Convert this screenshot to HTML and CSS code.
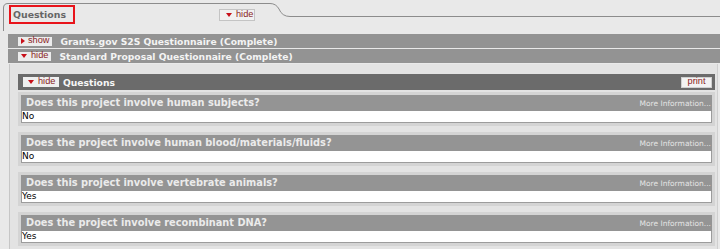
FILE: index.html
```html
<!DOCTYPE html>
<html>
<head>
<meta charset="utf-8">
<link rel="stylesheet" href="styles.css">
</head>
<body>
<div class="tabrow">
  <svg class="tabline" width="720" height="34" viewBox="0 0 720 34">
    <path d="M3.5,31 V8 Q3.5,3.5 8,3.5 H270 Q276,3.5 279,9 Q282,16.5 290,16.5 H720" fill="none" stroke="#8c8c8c" stroke-width="1"/>
  </svg>
  <div class="tabcontent">
    <h2 class="tabtitle">Questions</h2>
    <span class="btn btn-tab"><span class="tri-down"></span>hide</span>
  </div>
</div>
<div class="section">
  <div class="bar">
    <span class="btn btn-bar"><span class="tri-right"></span>show</span>
    <span class="bar-title">Grants.gov S2S Questionnaire (Complete)</span>
  </div>
  <div class="bar">
    <span class="btn btn-bar"><span class="tri-down"></span>hide</span>
    <span class="bar-title">Standard Proposal Questionnaire (Complete)</span>
  </div>
  <div class="panel">
    <div class="qbar">
      <span class="btn btn-q"><span class="tri-down"></span>hide</span>
      <span class="qbar-title">Questions</span>
      <span class="btn btn-print">print</span>
    </div>
    <div class="qlist">
      <div class="qblock">
        <div class="qhead"><span class="qtext">Does this project involve human subjects?</span><span class="more">More Information...</span></div>
        <div class="answer">No</div>
      </div>
      <div class="qblock">
        <div class="qhead"><span class="qtext">Does the project involve human blood/materials/fluids?</span><span class="more">More Information...</span></div>
        <div class="answer">No</div>
      </div>
      <div class="qblock">
        <div class="qhead"><span class="qtext">Does this project involve vertebrate animals?</span><span class="more">More Information...</span></div>
        <div class="answer">Yes</div>
      </div>
      <div class="qblock">
        <div class="qhead"><span class="qtext">Does the project involve recombinant DNA?</span><span class="more">More Information...</span></div>
        <div class="answer">Yes</div>
      </div>
    </div>
  </div>
</div>
</body>
</html>
```

FILE: styles.css
```css
* { box-sizing: border-box; }
html, body { margin: 0; padding: 0; }
body {
  background: #e9e9e9;
  font-family: "DejaVu Sans", Verdana, sans-serif;
  width: 720px;
  height: 249px;
  overflow: hidden;
}
.tabrow {
  position: relative;
  height: 34px;
}
.tabline {
  position: absolute;
  left: 0;
  top: 0;
}
.tabcontent {
  position: relative;
  display: flex;
  align-items: flex-start;
  padding: 5px 0 0 9px;
}
.tabtitle {
  margin: 0;
  width: 66px;
  height: 19px;
  border: 2px solid #e8141b;
  font-size: 9.4px;
  font-weight: bold;
  color: #666666;
  line-height: 15px;
  padding-left: 2px;
}
.btn {
  display: inline-flex;
  align-items: center;
  font-family: "Liberation Sans", Arial, sans-serif;
  font-size: 9.2px;
  color: #8a1c1c;
  background: #f1f1f1;
  border: 1px solid #c4c4c4;
  line-height: 1;
}
.tri-down {
  display: inline-block;
  width: 0;
  height: 0;
  border-left: 3px solid transparent;
  border-right: 3px solid transparent;
  border-top: 4px solid #c8101a;
  margin-right: 4px;
}
.tri-right {
  display: inline-block;
  width: 0;
  height: 0;
  border-top: 3px solid transparent;
  border-bottom: 3px solid transparent;
  border-left: 4px solid #c8101a;
  margin-right: 3px;
}
.btn-tab {
  margin-left: 144px;
  margin-top: 4px;
  width: 36px;
  height: 12px;
  padding-left: 6px;
}
.section {
  padding-left: 8px;
}
.bar {
  display: flex;
  align-items: center;
  height: 14px;
  background: #939393;
  margin-bottom: 1px;
  padding-left: 10px;
}
.btn-bar {
  height: 9px;
  border: none;
  background: #ececec;
  padding-left: 3px;
  padding-right: 3px;
  min-width: 32px;
}
.bar-title {
  margin-left: 8px;
  font-size: 9.2px;
  font-weight: bold;
  color: #f4f4f4;
}
.panel {
  margin-left: 1px;
  margin-right: 2px;
  border-left: 1px solid #c6c6c6;
  border-right: 1px solid #cfcfcf;
  background: #e3e3e3;
  padding: 10px 2px 0 8px;
  height: 186px;
  overflow: hidden;
}
.qbar {
  display: flex;
  align-items: center;
  height: 16px;
  background: #6b6b6b;
  padding: 0 3px 0 5px;
}
.btn-q {
  height: 10px;
  width: 36px;
  border: none;
  background: #efefef;
  padding-left: 5px;
}
.qbar-title {
  margin-left: 4px;
  font-size: 9.2px;
  font-weight: bold;
  color: #f6f6f6;
  flex: 1;
}
.btn-print {
  height: 11px;
  width: 31px;
  justify-content: center;
  background: #f3f3f3;
  border: 1px solid #d0d0d0;
}
.qlist {
  padding-top: 2px;
  display: flex;
  flex-direction: column;
  gap: 6px;
}
.qblock {
  border: 3px solid #d4d4d4;
}
.qhead {
  display: flex;
  align-items: baseline;
  justify-content: space-between;
  height: 16px;
  background: #949494;
  padding: 2px 1px 0 5px;
}
.qtext {
  font-size: 9.8px;
  font-weight: bold;
  color: #ebebeb;
  line-height: 12px;
}
.more {
  font-size: 7.5px;
  color: #e4e4e4;
  line-height: 12px;
}
.answer {
  height: 12px;
  background: #ffffff;
  border: 1px solid #9c9c9c;
  border-top: none;
  font-size: 9px;
  line-height: 10px;
  color: #000;
  padding-left: 0;
}
```
